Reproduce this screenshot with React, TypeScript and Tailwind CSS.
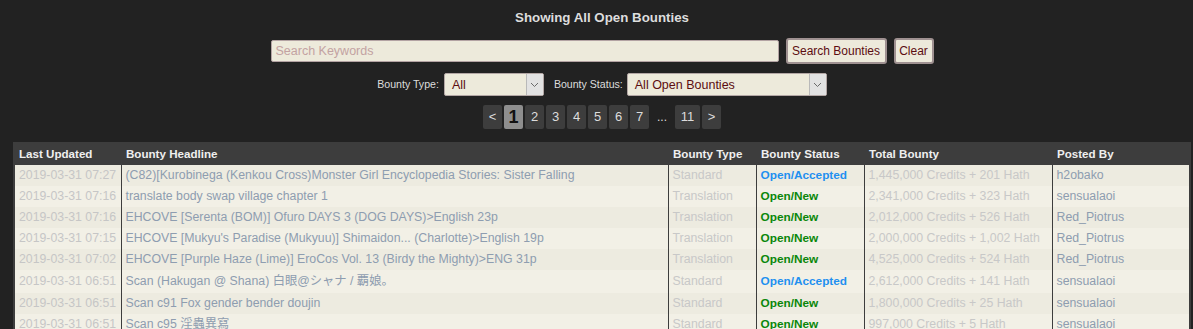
import React from "react";

type Row = {
  date: string;
  title: string;
  type: string;
  status: "Open/Accepted" | "Open/New";
  total: string;
  by: string;
  tall?: boolean;
};

const rows: Row[] = [
  { date: "2019-03-31 07:27", title: "(C82)[Kurobinega (Kenkou Cross)Monster Girl Encyclopedia Stories: Sister Falling", type: "Standard", status: "Open/Accepted", total: "1,445,000 Credits + 201 Hath", by: "h2obako" },
  { date: "2019-03-31 07:16", title: "translate body swap village chapter 1", type: "Translation", status: "Open/New", total: "2,341,000 Credits + 323 Hath", by: "sensualaoi" },
  { date: "2019-03-31 07:16", title: "EHCOVE [Serenta (BOM)] Ofuro DAYS 3 (DOG DAYS)>English 23p", type: "Translation", status: "Open/New", total: "2,012,000 Credits + 526 Hath", by: "Red_Piotrus" },
  { date: "2019-03-31 07:15", title: "EHCOVE [Mukyu's Paradise (Mukyuu)] Shimaidon... (Charlotte)>English 19p", type: "Translation", status: "Open/New", total: "2,000,000 Credits + 1,002 Hath", by: "Red_Piotrus" },
  { date: "2019-03-31 07:02", title: "EHCOVE [Purple Haze (Lime)] EroCos Vol. 13 (Birdy the Mighty)>ENG 31p", type: "Translation", status: "Open/New", total: "4,525,000 Credits + 524 Hath", by: "Red_Piotrus" },
  { date: "2019-03-31 06:51", title: "Scan (Hakugan @ Shana) 白眼@シャナ / 覇娘。", type: "Standard", status: "Open/Accepted", total: "2,612,000 Credits + 141 Hath", by: "sensualaoi", tall: true },
  { date: "2019-03-31 06:51", title: "Scan c91 Fox gender bender doujin", type: "Standard", status: "Open/New", total: "1,800,000 Credits + 25 Hath", by: "sensualaoi" },
  { date: "2019-03-31 06:51", title: "Scan c95 淫蟲異寫", type: "Standard", status: "Open/New", total: "997,000 Credits + 5 Hath", by: "sensualaoi" },
];

function Chevron() {
  return (
    <svg width="9" height="6" viewBox="0 0 9 6" fill="none">
      <path d="M1 1 L4.5 4.5 L8 1" stroke="#6b6b6b" strokeWidth="1" />
    </svg>
  );
}

function Select({ value, width }: { value: string; width: string }) {
  return (
    <div className={`flex h-[23px] ${width} items-stretch rounded-[2px] border border-[#b3a7a5] bg-[#edeadb]`}>
      <div className="flex flex-1 items-center pl-[7px] pt-[1px] text-[12.5px] text-[#5c0d11]">{value}</div>
      <div className="flex w-[17px] items-center justify-center border-l border-[#b9b9b9] bg-[#e2e2e2]">
        <Chevron />
      </div>
    </div>
  );
}

function PageBtn({ label, active, w = "w-[19px]" }: { label: string; active?: boolean; w?: string }) {
  return (
    <div
      className={`flex h-[24px] ${w} items-center justify-center rounded-[2px] ${
        active ? "bg-[#8e8e8e] text-[18px] font-bold text-[#111]" : "bg-[#3d3d3d] text-[13px] text-[#dcdcdc]"
      }`}
    >
      {label}
    </div>
  );
}

export default function App() {
  return (
    <div
      className="h-[329px] w-[1193px] overflow-hidden bg-[#222222]"
      style={{ fontFamily: '"Liberation Sans", Arial, "Noto Sans CJK JP", sans-serif' }}
    >
      <div className="ml-[13px] w-[1178px] pt-[10px]">
        <div className="flex h-[16px] items-center justify-center text-[13.3px] font-bold leading-[16px] text-[#dddddd]">
          Showing All Open Bounties
        </div>

        <div className="mt-[12px] flex h-[26px] items-center justify-center">
          <div className="flex h-[22px] w-[508px] items-center rounded-[2px] border border-[#b3a3a3] bg-[#edeadb] pl-[4px] text-[12.5px] text-[#c3a2a2]">
            Search Keywords
          </div>
          <div className="ml-[7px] flex h-[26px] w-[101px] items-center justify-center rounded-[3px] border-2 border-[#9f9191] bg-[#edeadb] text-[12px] text-[#5c0d11]">
            Search Bounties
          </div>
          <div className="ml-[7px] flex h-[26px] w-[40px] items-center justify-center rounded-[3px] border-2 border-[#9f9191] bg-[#edeadb] text-[12px] text-[#5c0d11]">
            Clear
          </div>
        </div>

        <div className="mt-[9px] flex h-[23px] items-center justify-center text-[10.6px] text-[#dddddd]">
          <span className="mr-[5px]">Bounty Type:</span>
          <Select value="All" width="w-[100px]" />
          <span className="ml-[10px] mr-[4px]">Bounty Status:</span>
          <Select value="All Open Bounties" width="w-[200px]" />
        </div>

        <div className="mt-[9px] flex h-[24px] items-center justify-center gap-[2px]">
          <PageBtn label="<" />
          <PageBtn label="1" active />
          <PageBtn label="2" />
          <PageBtn label="3" />
          <PageBtn label="4" />
          <PageBtn label="5" />
          <PageBtn label="6" />
          <PageBtn label="7" />
          <div className="flex h-[24px] w-[22px] items-center justify-center text-[12px] text-[#dcdcdc]">...</div>
          <PageBtn label="11" w="w-[25px]" />
          <PageBtn label=">" />
        </div>

        <div className="mt-[13px] bg-[#3d3d3d] px-[2px]">
          <table className="w-[1174px] table-fixed border-collapse">
            <colgroup>
              <col className="w-[106px]" />
              <col className="w-[547px]" />
              <col className="w-[88px]" />
              <col className="w-[108px]" />
              <col className="w-[188px]" />
              <col className="w-[137px]" />
            </colgroup>
            <thead>
              <tr className="h-[23px] text-left text-[11.6px] font-bold text-[#efefef]">
                <th className="pl-[4px] font-bold">Last Updated</th>
                <th className="pl-[5px] font-bold">Bounty Headline</th>
                <th className="pl-[5px] font-bold">Bounty Type</th>
                <th className="pl-[5px] font-bold">Bounty Status</th>
                <th className="pl-[5px] font-bold">Total Bounty</th>
                <th className="pl-[5px] font-bold">Posted By</th>
              </tr>
            </thead>
            <tbody>
              {rows.map((r, i) => (
                <tr
                  key={i}
                  className={`${r.tall ? "h-[23px]" : "h-[21px]"} ${i % 2 === 0 ? "bg-[#edebe0]" : "bg-[#f2f0e6]"} text-[12.3px] leading-[15px]`}
                >
                  <td className="whitespace-nowrap pl-[4px] text-[#c6c6c6]">{r.date}</td>
                  <td className="whitespace-nowrap border-l border-[#3d3d3d] pl-[4px] text-[#8e9db0]">{r.title}</td>
                  <td className="whitespace-nowrap border-l border-[#3d3d3d] pl-[4px] text-[#c8c8c8]">{r.type}</td>
                  <td
                    className={`whitespace-nowrap border-l border-[#3d3d3d] pl-[4px] text-[11.8px] font-bold ${
                      r.status === "Open/Accepted" ? "text-[#1f90f0]" : "text-[#0a870a]"
                    }`}
                  >
                    {r.status}
                  </td>
                  <td className="whitespace-nowrap border-l border-[#3d3d3d] pl-[4px] text-[#c8c8c8]">{r.total}</td>
                  <td className="whitespace-nowrap border-l border-[#3d3d3d] pl-[4px] text-[#8e9db0]">{r.by}</td>
                </tr>
              ))}
            </tbody>
          </table>
        </div>
      </div>
    </div>
  );
}
